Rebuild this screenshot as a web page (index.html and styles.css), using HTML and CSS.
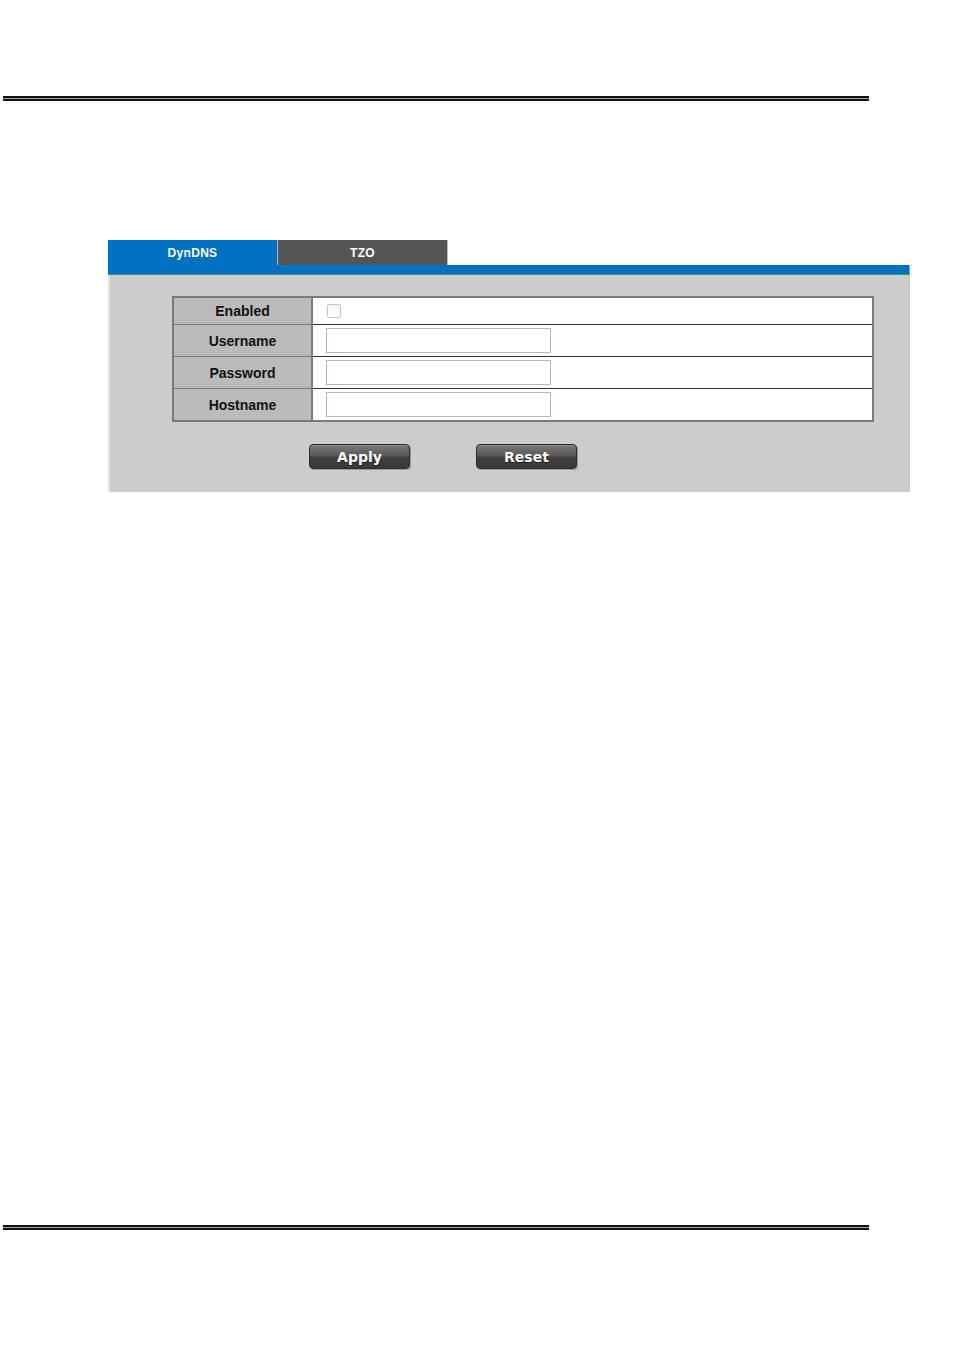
FILE: index.html
```html
<!DOCTYPE html>
<html>
<head>
<meta charset="utf-8">
<link rel="stylesheet" href="styles.css">
</head>
<body>
<div class="page">
  <div class="rule rule-top"></div>
  <div class="widget">
    <div class="tabs">
      <div class="tab tab-active">DynDNS</div>
      <div class="tab tab-idle">TZO</div>
    </div>
    <div class="tabbar"></div>
    <div class="panel">
      <table class="form">
        <tr class="r-enabled">
          <th>Enabled</th>
          <td><span class="check"></span></td>
        </tr>
        <tr class="r-field">
          <th>Username</th>
          <td><span class="input"></span></td>
        </tr>
        <tr class="r-field">
          <th>Password</th>
          <td><span class="input"></span></td>
        </tr>
        <tr class="r-field">
          <th>Hostname</th>
          <td><span class="input"></span></td>
        </tr>
      </table>
      <div class="buttons">
        <button class="btn">Apply</button>
        <button class="btn">Reset</button>
      </div>
    </div>
  </div>
  <div class="rule rule-bottom"></div>
</div>
</body>
</html>
```
FILE: styles.css
```css
html, body {
  margin: 0;
  padding: 0;
  background: #ffffff;
}
.page {
  width: 954px;
  height: 1350px;
  padding-top: 96px;
  box-sizing: border-box;
  font-family: "Liberation Sans", Arial, sans-serif;
}
.rule {
  margin-left: 3px;
  width: 866px;
  height: 1px;
  background: #a8a8a8;
  border-top: 2px solid #111111;
  border-bottom: 2px solid #111111;
}
.rule-top {
  margin-bottom: 139px;
}
.rule-bottom {
  margin-top: 733px;
}
.widget {
  margin-left: 108px;
  width: 802px;
}
.tabs {
  display: flex;
  height: 25px;
}
.tab {
  width: 170px;
  height: 25px;
  box-sizing: border-box;
  padding-top: 2px;
  line-height: 23px;
  text-align: center;
  color: #ffffff;
  font-weight: bold;
  font-size: 12px;
  letter-spacing: 0.3px;
}
.tab-active {
  background: #0070c0;
  border-right: 1px solid #9cc0e0;
}
.tab-idle {
  background: #555555;
  border-right: 1px solid #bdbdbd;
}
.tabbar {
  height: 9px;
  background: #0070c0;
  border-bottom: 1px solid #3a9a6a;
  border-right: 1px solid #6aaee0;
}
.panel {
  background: #cccccc;
  height: 217px;
  box-sizing: border-box;
  padding: 21px 0 0 62px;
  border-left: 2px solid #e2e2e2;
}
.form {
  width: 702px;
  border-collapse: collapse;
  background: #ffffff;
  border: 2px solid #7a7a7a;
}
.form th {
  width: 137px;
  background: #bbbbbb;
  color: #111111;
  font-size: 14px;
  font-weight: bold;
  text-align: center;
  border: 1px solid #7a7a7a;
  border-right: 2px solid #7a7a7a;
  padding: 0;
}
.form td {
  border-top: 1px solid #333333;
  border-bottom: 1px solid #333333;
  padding: 0 0 0 13px;
}
.r-enabled th, .r-enabled td {
  height: 26px;
  border-top: none;
}
.r-field th, .r-field td {
  height: 31px;
}
.check {
  display: block;
  width: 12px;
  height: 12px;
  margin-left: 1px;
  border: 1px solid #c4c4c4;
  border-radius: 2px;
  background: linear-gradient(#f4f4f4, #ffffff);
}
.input {
  display: block;
  width: 223px;
  height: 23px;
  border: 1px solid #b4b4cc;
  background: #ffffff;
}
.buttons {
  display: flex;
  gap: 66px;
  margin: 22px 0 0 137px;
}
.btn {
  width: 101px;
  height: 25px;
  padding: 0;
  border: 1px solid #2a2a2a;
  border-radius: 4px;
  background: linear-gradient(#7a7a7a 0%, #5a5a5a 45%, #3e3e3e 55%, #3a3a3a 100%);
  box-shadow: inset 0 1px 0 #8c8c8c, 1px 1px 0 #9a9a9a;
  color: #ffffff;
  font-family: "DejaVu Sans", Verdana, sans-serif;
  font-weight: bold;
  font-size: 14px;
  text-shadow: 0 1px 1px #222222;
}
```
